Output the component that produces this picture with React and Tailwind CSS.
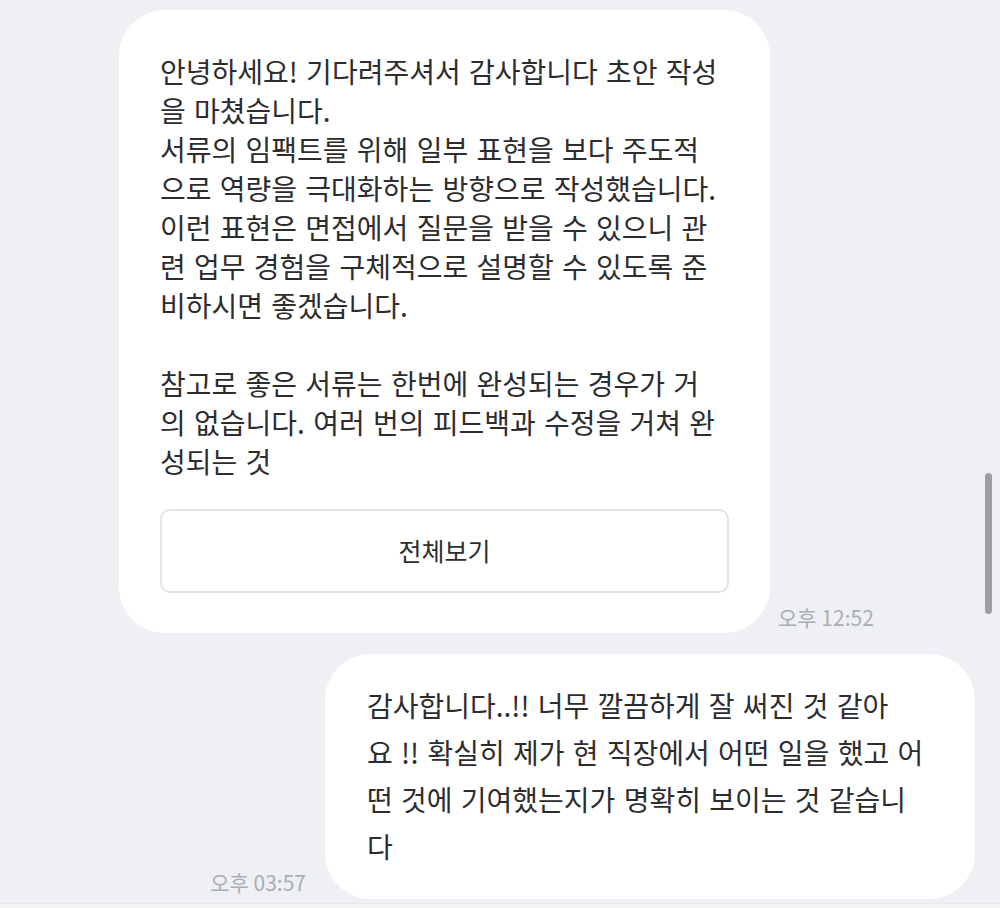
import React from "react";

const font = { fontFamily: '"Noto Sans CJK KR", "Noto Sans", sans-serif' };

const bubble1 = [
  "안녕하세요! 기다려주셔서 감사합니다 초안 작성",
  "을 마쳤습니다.",
  "서류의 임팩트를 위해 일부 표현을 보다 주도적",
  "으로 역량을 극대화하는 방향으로 작성했습니다.",
  "이런 표현은 면접에서 질문을 받을 수 있으니 관",
  "련 업무 경험을 구체적으로 설명할 수 있도록 준",
  "비하시면 좋겠습니다.",
  "",
  "참고로 좋은 서류는 한번에 완성되는 경우가 거",
  "의 없습니다. 여러 번의 피드백과 수정을 거쳐 완",
  "성되는 것",
];

const bubble2 = [
  "감사합니다..!! 너무 깔끔하게 잘 써진 것 같아",
  "요 !! 확실히 제가 현 직장에서 어떤 일을 했고 어",
  "떤 것에 기여했는지가 명확히 보이는 것 같습니",
  "다",
];

export default function App() {
  return (
    <div
      className="relative w-[1000px] h-[908px] overflow-hidden bg-[#eff0f4] text-[#2d2d2f]"
      style={font}
    >
      <div className="flex items-end pl-[119px] pt-[10px]">
        <div className="w-[651px] rounded-[46px] bg-white pl-[41px] pr-[41px] pt-[42px] pb-[40px]">
          <div className="text-[28px] leading-[39px] [word-spacing:2px]">
            {bubble1.map((l, i) => (
              <div key={i} className="whitespace-nowrap h-[39px]">
                {l}
              </div>
            ))}
          </div>
          <div className="mt-[28px] flex h-[84px] items-center justify-center rounded-[10px] border-2 border-[#e3e4e7] text-[25px] text-[#2d2d2f]">
            전체보기
          </div>
        </div>
        <div className="ml-[8px] mb-0 text-[21px] text-[#a9adb5] whitespace-nowrap">
          오후 12:52
        </div>
      </div>

      <div className="mt-[21px] flex items-end justify-end pr-[25px]">
        <div className="mr-[19px] mb-[1px] text-[21px] text-[#a9adb5] whitespace-nowrap">
          오후 03:57
        </div>
        <div className="w-[650px] rounded-[46px] bg-white pl-[42px] pr-[30px] pt-[28px] pb-[29px]">
          <div className="text-[28px] leading-[47px] [word-spacing:2px]">
            {bubble2.map((l, i) => (
              <div key={i} className="whitespace-nowrap h-[47px]">
                {l}
              </div>
            ))}
          </div>
        </div>
      </div>

      <div className="absolute left-0 right-0 bottom-0 h-[5px] bg-[#f4f5f7] border-t border-[#e6e7ea]" />
      <div className="absolute left-[985px] top-[473px] h-[141px] w-[7px] rounded-full bg-[#9d9da1]" />
    </div>
  );
}
